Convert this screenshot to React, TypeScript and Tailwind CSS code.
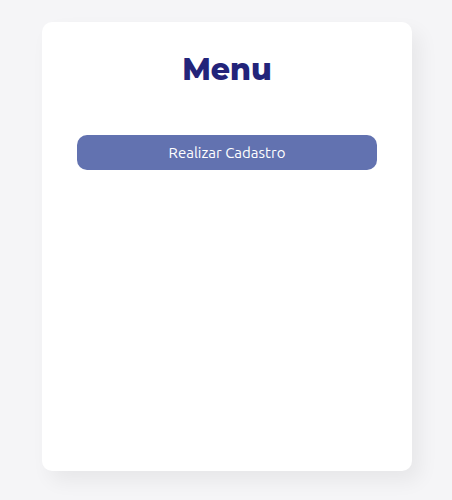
export default function App() {
  return (
    <div className="min-h-[500px] w-full bg-[#f5f5f7] pt-[22px]">
      <div className="ml-[42px] flex h-[449px] w-[370px] flex-col items-center rounded-[10px] bg-white shadow-[8px_10px_20px_rgba(0,0,0,0.06)]">
        <h1 className="mt-[30px] font-['Montserrat','Lato',sans-serif] text-[30px] leading-[36px] font-extrabold text-[#23247a]">
          Menu
        </h1>
        <button
          type="button"
          className="mt-[47px] h-[35px] w-[300px] rounded-[10px] bg-[#6272b0] pt-px font-['Ubuntu','Noto_Sans',sans-serif] text-[15px] text-white"
        >
          Realizar Cadastro
        </button>
      </div>
    </div>
  );
}
